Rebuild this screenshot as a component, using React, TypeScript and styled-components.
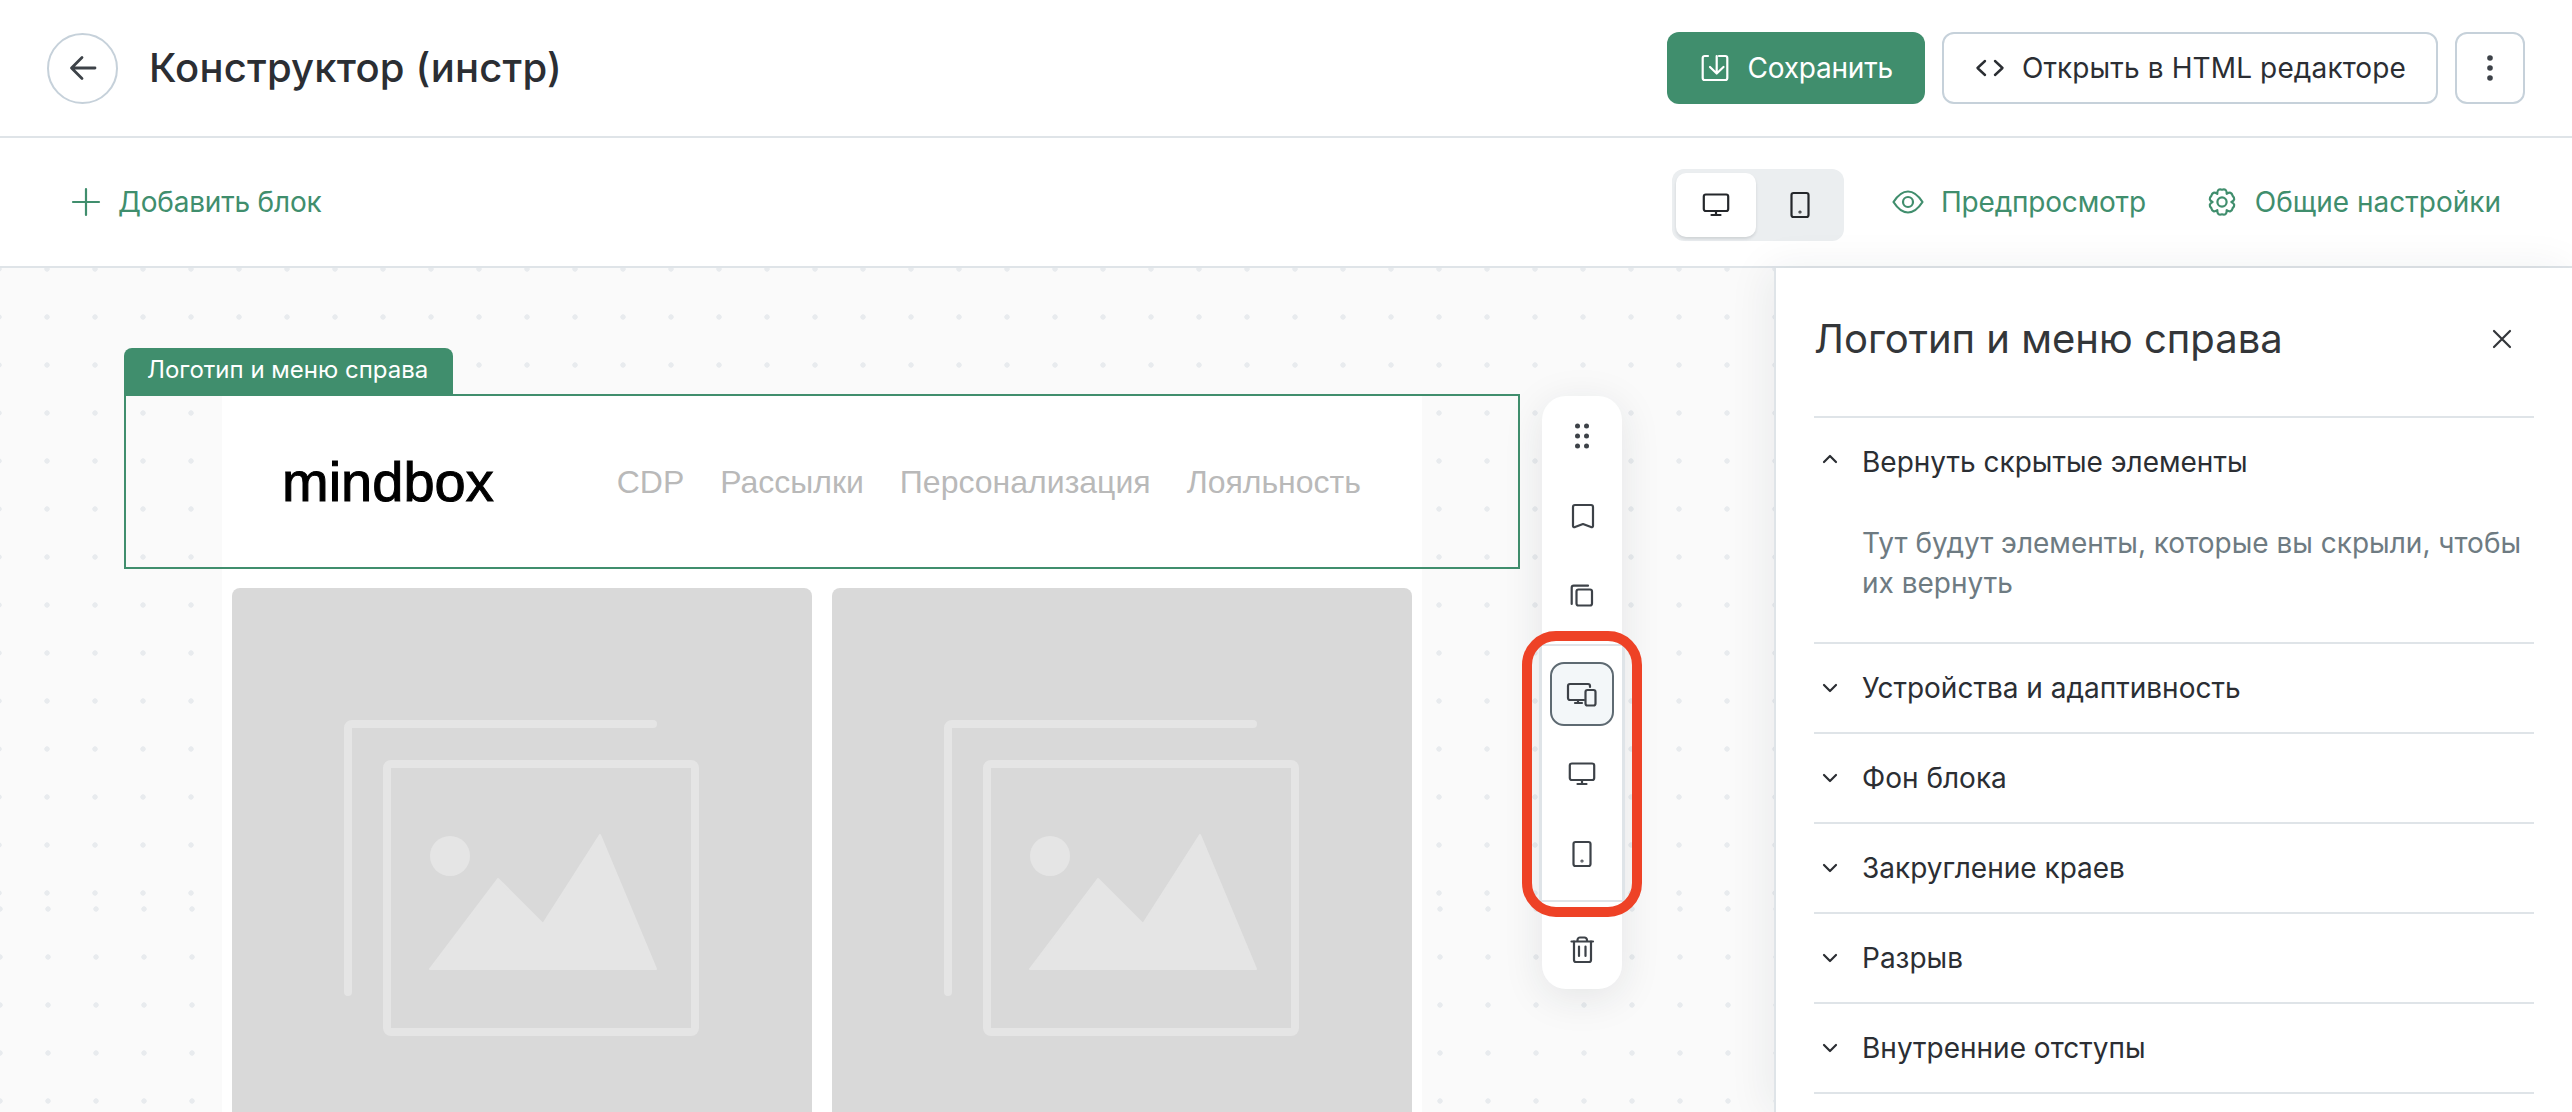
import React from 'react';
import styled, { createGlobalStyle } from 'styled-components';

const GREEN = '#408e6d';
const INK = '#2b2e33';
const ICON = '#3d4248';
const LINE = '#dfe4e8';
const CONTROL = '#c6d1da';

const GlobalStyle = createGlobalStyle`
  html, body { margin: 0; padding: 0; }
  body {
    width: 2572px;
    height: 1112px;
    overflow: hidden;
    background: #fff;
    font-family: Inter, "Noto Sans", sans-serif;
    color: ${INK};
  }
  * { box-sizing: border-box; }
`;

const Page = styled.div`
  display: flex;
  flex-direction: column;
  width: 2572px;
  height: 1112px;
`;

const Header = styled.header`
  display: flex;
  align-items: center;
  flex: none;
  height: 138px;
  padding: 0 47px;
  background: #fff;
  border-bottom: 2px solid ${LINE};
`;

const BackButton = styled.button`
  display: flex;
  align-items: center;
  justify-content: center;
  width: 71px;
  height: 71px;
  padding: 0;
  background: #fff;
  border: 2px solid ${CONTROL};
  border-radius: 50%;
`;

const Title = styled.h1`
  margin: 0 0 0 31px;
  font-size: 40px;
  line-height: 48px;
  font-weight: 500;
  letter-spacing: 0.2px;
  color: ${INK};
`;

const HeaderActions = styled.div`
  display: flex;
  gap: 17px;
  margin-left: auto;
`;

const ActionButton = styled.button<{ $primary?: boolean }>`
  display: flex;
  align-items: center;
  gap: 16px;
  height: 72px;
  padding: 0 ${(p) => (p.$primary ? 32 : 30)}px;
  font: 400 28px/36px Inter, sans-serif;
  letter-spacing: ${(p) => (p.$primary ? '-0.2px' : '0.12px')};
  color: ${(p) => (p.$primary ? '#fff' : INK)};
  background: ${(p) => (p.$primary ? GREEN : '#fff')};
  border: ${(p) => (p.$primary ? 'none' : `2px solid ${CONTROL}`)};
  border-radius: 12px;
`;

const MoreButton = styled.button`
  display: flex;
  align-items: center;
  justify-content: center;
  width: 70px;
  height: 72px;
  padding: 0;
  background: #fff;
  border: 2px solid ${CONTROL};
  border-radius: 12px;
`;

const Toolbar = styled.div`
  display: flex;
  align-items: center;
  flex: none;
  height: 130px;
  padding: 0 71px 0 70px;
  background: #fff;
  border-bottom: 2px solid ${LINE};
`;

const TextLink = styled.a<{ $gap?: number; $tight?: boolean }>`
  display: flex;
  align-items: center;
  gap: ${(p) => p.$gap ?? 17}px;
  font-size: 28px;
  line-height: 36px;
  letter-spacing: ${(p) => (p.$tight ? '-0.2px' : '0')};
  color: ${GREEN};
`;

const ToolbarRight = styled.div`
  display: flex;
  align-items: center;
  gap: 60px;
  margin-left: auto;
`;

const PreviewGroup = styled.div`
  display: flex;
  align-items: center;
  gap: 48px;
`;

const DeviceSwitch = styled.div`
  display: flex;
  gap: 4px;
  width: 172px;
  height: 72px;
  margin-top: 6px;
  padding: 4px;
  background: #ebeef0;
  border-radius: 12px;
`;

const DeviceOption = styled.div<{ $active?: boolean }>`
  display: flex;
  align-items: center;
  justify-content: center;
  width: 80px;
  height: 64px;
  background: ${(p) => (p.$active ? '#fff' : 'transparent')};
  border-radius: 10px;
  box-shadow: ${(p) => (p.$active ? '0 2px 3px rgba(40, 50, 60, 0.14)' : 'none')};
`;

const Workspace = styled.div`
  display: flex;
  flex: 1;
  min-height: 0;
`;

const dots = `radial-gradient(circle at center, #e8ebee 2.4px, transparent 3px)`;

const Canvas = styled.main`
  position: relative;
  z-index: 0;
  display: flex;
  flex-direction: column;
  flex: 1;
  min-width: 0;
  padding: 80px 0 0 124px;
  overflow: hidden;
  background-color: #fafafa;
  background-image: ${dots};
  background-size: 48px 48px;
  background-position: 23px -23px;

  /* the lower part of the picture is a second capture, its dot grid sits a little off */
  &::after {
    content: '';
    position: absolute;
    z-index: -1;
    left: 0;
    right: 0;
    top: 630px;
    bottom: 0;
    background-color: #fafafa;
    background-image: ${dots};
    background-size: 48px 48px;
    background-position: 24px -13px;
  }
`;

const BlockLabel = styled.div`
  flex: none;
  align-self: flex-start;
  height: 46px;
  padding: 0 25px 0 23px;
  font-size: 24px;
  line-height: 44px;
  color: #fff;
  background: ${GREEN};
  border-radius: 8px 8px 0 0;
`;

const BlockFrame = styled.div`
  display: flex;
  justify-content: center;
  flex: none;
  width: 1396px;
  height: 175px;
  border: 2px solid ${GREEN};
`;

const MenuSheet = styled.div`
  display: flex;
  align-items: center;
  width: 1200px;
  padding-left: 60px;
  background: #fff;
`;

const Logo = styled.div`
  font-family: "Liberation Sans", Arial, sans-serif;
  font-size: 56px;
  line-height: 64px;
  letter-spacing: 0;
  color: #000;
  -webkit-text-stroke: 1px #000;
`;

const MenuList = styled.nav`
  display: flex;
  gap: 36px;
  margin-left: 123px;
  font-family: "Liberation Sans", Arial, sans-serif;
  font-size: 32px;
  line-height: 40px;
  color: #b9b9b9;
`;

const CardSheet = styled.div`
  display: grid;
  grid-template-columns: 580px 580px;
  gap: 20px;
  flex: 1;
  width: 1200px;
  margin-left: 98px;
  padding: 19px 10px 0;
  background: #fff;
`;

const ImageCard = styled.div`
  display: flex;
  justify-content: center;
  align-items: flex-start;
  height: 700px;
  padding-top: 132px;
  background: #d9d9d9;
  border-radius: 8px;
`;

const BlockTools = styled.aside`
  position: absolute;
  top: 128px;
  left: 1542px;
  display: flex;
  flex-direction: column;
  gap: 8px;
  width: 80px;
  height: 593px;
  background: #fff;
  border-radius: 24px;
  box-shadow: 0 8px 40px rgba(30, 40, 50, 0.1);
`;

const ToolCell = styled.div`
  display: flex;
  align-items: center;
  justify-content: center;
  flex: none;
  width: 80px;
  height: 80px;
`;

const ToolStack = styled.div`
  display: flex;
  flex-direction: column;
`;

const ToolButton = styled.div<{ $active?: boolean }>`
  display: flex;
  align-items: center;
  justify-content: center;
  width: 64px;
  height: 64px;
  background: ${(p) => (p.$active ? '#f3f7f9' : 'transparent')};
  border: ${(p) => (p.$active ? '2px solid #5e6a72' : 'none')};
  border-radius: 14px;
`;

const DeviceTools = styled.div`
  display: flex;
  flex-direction: column;
  flex: none;
  height: 258px;
  margin: 0 -3px -1px;
  padding: 8px 0 6px;
  background: #fff;
  border-style: solid;
  border-color: ${LINE};
  border-width: 2px 3px;
`;

const Highlight = styled.div`
  position: absolute;
  top: 235px;
  left: -20px;
  width: 120px;
  height: 286px;
  border: 10px solid #ee4226;
  border-radius: 34px;
  pointer-events: none;
`;

const Panel = styled.aside`
  position: relative;
  display: flex;
  flex-direction: column;
  flex: none;
  width: 798px;
  padding: 0 38px;
  background: #fff;
  border-left: 2px solid ${LINE};
  box-shadow: -6px 0 40px rgba(30, 40, 50, 0.07);
`;

const PanelHead = styled.div`
  display: flex;
  align-items: center;
  justify-content: space-between;
  flex: none;
  height: 150px;
  padding: 0 16px 6px 0;
  border-bottom: 2px solid ${LINE};
`;

const PanelTitle = styled.h2`
  margin: 0;
  font-size: 40px;
  line-height: 48px;
  font-weight: 400;
  color: #333639;
`;

const Section = styled.section`
  flex: none;
  border-bottom: 2px solid ${LINE};
`;

const SectionHead = styled.div`
  display: flex;
  align-items: center;
  gap: 16px;
  height: 88px;
  font-size: 28px;
  line-height: 36px;
  color: ${INK};
`;

const SectionBody = styled.p`
  margin: 17px 0 0;
  padding: 0 0 39px 48px;
  font-size: 28px;
  line-height: 40px;
  color: #6e7b82;
`;

type IconProps = { color?: string };

const Svg = ({ color = ICON, width = 2.2, children }: IconProps & { width?: number; children: React.ReactNode }) => (
  <svg width="32" height="32" viewBox="0 0 32 32" fill="none" stroke={color} strokeWidth={width} strokeLinecap="round" strokeLinejoin="round">
    {children}
  </svg>
);

const ArrowBackIcon = () => (
  <Svg width={2.8}>
    <path d="M28 16H5M15 5.5 4.5 16 15 26.5" />
  </Svg>
);

const PlusIcon = () => (
  <Svg color={GREEN} width={2.2}>
    <path d="M16 3v26M3 16h26" />
  </Svg>
);

const SaveIcon = () => (
  <Svg color="#fff" width={2.2}>
    <path d="M9 4H5.7a2 2 0 0 0-2 2v20a2 2 0 0 0 2 2h20.6a2 2 0 0 0 2-2V6a2 2 0 0 0-2-2H20" />
    <path d="M17.7 4v17M11 15l6.7 6.5 6.8-6.5" />
  </Svg>
);

const CodeIcon = () => (
  <Svg color={INK} width={2.4}>
    <path d="M11 9l-7.5 7 7.5 7M21 9l7.5 7-7.5 7" />
  </Svg>
);

const EyeIcon = () => (
  <Svg color={GREEN}>
    <path d="M1.5 16C6 9 10.5 5.5 16 5.5S26 9 30.5 16C26 23 21.5 26.5 16 26.5S6 23 1.5 16Z" />
    <circle cx="16" cy="16" r="5" />
  </Svg>
);

const gearPath = (() => {
  const pt = (deg: number, r: number) => {
    const a = (deg * Math.PI) / 180;
    return `${(16 + r * Math.cos(a)).toFixed(2)} ${(16 + r * Math.sin(a)).toFixed(2)}`;
  };
  let d = `M${pt(-120, 9.4)}`;
  for (let i = 0; i < 6; i++) {
    const a = -90 + 60 * i;
    d += `Q${pt(a - 20, 14.6)} ${pt(a, 12.3)}Q${pt(a + 20, 14.6)} ${pt(a + 30, 9.4)}`;
  }
  return d + 'Z';
})();

const GearIcon = () => (
  <Svg color={GREEN}>
    <path d={gearPath} />
    <circle cx="16" cy="16" r="4.6" />
  </Svg>
);

const DesktopIcon = ({ color }: IconProps) => (
  <Svg color={color}>
    <rect x="3.8" y="5.5" width="24.4" height="16.5" rx="2" />
    <path d="M16 22v4M11.5 26h9" />
  </Svg>
);

const PhoneIcon = ({ color }: IconProps) => (
  <Svg color={color}>
    <rect x="7.5" y="4" width="17" height="24" rx="2" />
    <circle cx="16" cy="23" r="0.5" />
  </Svg>
);

const DevicesIcon = () => (
  <Svg>
    <path d="M18 22H4a2 2 0 0 1-2-2V8a2 2 0 0 1 2-2h18a2 2 0 0 1 2 2v1" />
    <path d="M12 22v3M9 25h7" />
    <rect x="19.5" y="12" width="10" height="15.5" rx="2" />
  </Svg>
);

const DragIcon = () => (
  <svg width="32" height="32" viewBox="0 0 32 32" fill={ICON}>
    {[6, 16, 26].map((y) => (
      <React.Fragment key={y}>
        <circle cx="11.5" cy={y} r="2.5" />
        <circle cx="20.5" cy={y} r="2.5" />
      </React.Fragment>
    ))}
  </svg>
);

const BookmarkIcon = () => (
  <Svg>
    <path d="M9 5h16a2 2 0 0 1 2 2v19c0 1-1 1.6-2 1l-8-3-8 3c-1 .6-2 0-2-1V7a2 2 0 0 1 2-2Z" />
  </Svg>
);

const CopyIcon = () => (
  <Svg>
    <rect x="10.5" y="9.5" width="15.5" height="16" rx="2" />
    <path d="M5.7 24V7.7a2 2 0 0 1 2-2H22" />
  </Svg>
);

const TrashIcon = () => (
  <Svg>
    <path d="M5.500 8.500H27M11.500 8.500V7a2.500 2.500 0 0 1 2.500-2.500h4.500A2.500 2.500 0 0 1 21 7v1.500" />
    <path d="M8 8.500V27a2 2 0 0 0 2 2h13a2 2 0 0 0 2-2V8.500M13 13.500V23M19.500 13.500V23" />
  </Svg>
);

const CloseIcon = () => (
  <Svg color="#33363a" width={2.2}>
    <path d="M8 8l16 16M24 8 8 24" />
  </Svg>
);

const ChevronIcon = ({ up }: { up?: boolean }) => (
  <Svg color={INK} width={2.2}>
    <path d={up ? 'M10 16l6-6 6 6' : 'M10 13l6 6 6-6'} />
  </Svg>
);

const DotsIcon = () => (
  <svg width="8" height="32" viewBox="0 0 8 32" fill={ICON}>
    <circle cx="4" cy="6" r="2.8" />
    <circle cx="4" cy="16" r="2.8" />
    <circle cx="4" cy="26" r="2.8" />
  </svg>
);

const ImagePlaceholder = () => (
  <svg width="364" height="320" viewBox="0 0 364 320" fill="none" stroke="#e5e5e5" strokeWidth="8" strokeLinecap="round" strokeLinejoin="round">
    <path d="M8 272V8a4 4 0 0 1 4-4h301" />
    <rect x="47" y="44" width="308" height="268" rx="4" />
    <circle cx="110" cy="136" r="20" fill="#e5e5e5" stroke="none" />
    <path d="M90 249 158 159 203 204 260 115 316 249Z" fill="#e5e5e5" stroke="#e5e5e5" strokeWidth="2" />
  </svg>
);

const sections = ['Устройства и адаптивность', 'Фон блока', 'Закругление краев', 'Разрыв', 'Внутренние отступы'];
const menu = ['CDP', 'Рассылки', 'Персонализация', 'Лояльность'];

const App = () => (
  <Page>
    <GlobalStyle />
    <Header>
      <BackButton>
        <ArrowBackIcon />
      </BackButton>
      <Title>Конструктор (инстр)</Title>
      <HeaderActions>
        <ActionButton $primary>
          <SaveIcon />
          Сохранить
        </ActionButton>
        <ActionButton>
          <CodeIcon />
          Открыть в HTML редакторе
        </ActionButton>
        <MoreButton>
          <DotsIcon />
        </MoreButton>
      </HeaderActions>
    </Header>
    <Toolbar>
      <TextLink $gap={16} $tight>
        <PlusIcon />
        Добавить блок
      </TextLink>
      <ToolbarRight>
        <PreviewGroup>
          <DeviceSwitch>
            <DeviceOption $active>
              <DesktopIcon color="#24272b" />
            </DeviceOption>
            <DeviceOption>
              <PhoneIcon color="#24272b" />
            </DeviceOption>
          </DeviceSwitch>
          <TextLink $tight>
            <EyeIcon />
            Предпросмотр
          </TextLink>
        </PreviewGroup>
        <TextLink>
          <GearIcon />
          Общие настройки
        </TextLink>
      </ToolbarRight>
    </Toolbar>
    <Workspace>
      <Canvas>
        <BlockLabel>Логотип и меню справа</BlockLabel>
        <BlockFrame>
          <MenuSheet>
            <Logo>mindbox</Logo>
            <MenuList>
              {menu.map((item) => (
                <span key={item}>{item}</span>
              ))}
            </MenuList>
          </MenuSheet>
        </BlockFrame>
        <CardSheet>
          <ImageCard>
            <ImagePlaceholder />
          </ImageCard>
          <ImageCard>
            <ImagePlaceholder />
          </ImageCard>
        </CardSheet>
        <BlockTools>
          <ToolStack>
            <ToolCell>
              <DragIcon />
            </ToolCell>
            <ToolCell>
              <BookmarkIcon />
            </ToolCell>
            <ToolCell>
              <CopyIcon />
            </ToolCell>
          </ToolStack>
          <DeviceTools>
            <ToolCell>
              <ToolButton $active>
                <DevicesIcon />
              </ToolButton>
            </ToolCell>
            <ToolCell>
              <DesktopIcon />
            </ToolCell>
            <ToolCell>
              <PhoneIcon />
            </ToolCell>
          </DeviceTools>
          <ToolCell>
            <TrashIcon />
          </ToolCell>
          <Highlight />
        </BlockTools>
      </Canvas>
      <Panel>
        <PanelHead>
          <PanelTitle>Логотип и меню справа</PanelTitle>
          <CloseIcon />
        </PanelHead>
        <Section>
          <SectionHead>
            <ChevronIcon up />
            Вернуть скрытые элементы
          </SectionHead>
          <SectionBody>Тут будут элементы, которые вы скрыли, чтобы их вернуть</SectionBody>
        </Section>
        {sections.map((name) => (
          <Section key={name}>
            <SectionHead>
              <ChevronIcon />
              {name}
            </SectionHead>
          </Section>
        ))}
      </Panel>
    </Workspace>
  </Page>
);

export default App;
